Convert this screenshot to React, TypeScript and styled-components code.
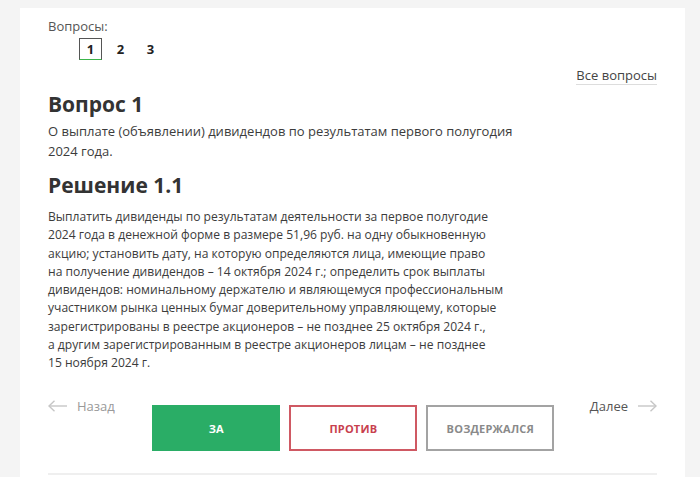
import React from "react";
import styled, { createGlobalStyle } from "styled-components";

const Global = createGlobalStyle`
  html, body { margin: 0; padding: 0; background: #f4f4f4; }
  body { font-family: "Open Sans", "Liberation Sans", sans-serif; color: #3c3c3c; }
  * { box-sizing: border-box; }
`;

const Card = styled.div`
  margin: 8px 0 0 20px;
  width: 665px;
  min-height: 469px;
  background: #fff;
  padding: 9px 28px 0 28px;
`;

const Label = styled.div`
  font-size: 13px;
  line-height: 18px;
  color: #555;
`;

const Pager = styled.div`
  display: flex;
  gap: 7px;
  margin: 3px 0 0 31px;
`;

const Page = styled.div<{ $active?: boolean }>`
  width: 23px;
  height: 22px;
  display: flex;
  align-items: center;
  justify-content: center;
  font-size: 13px;
  font-weight: 700;
  color: #222;
  border: 1px solid ${(p) => (p.$active ? "#555" : "transparent")};
  border-bottom-color: ${(p) => (p.$active ? "#3cb54a" : "transparent")};
`;

const AllRow = styled.div`
  display: flex;
  justify-content: flex-end;
  margin-top: 6px;
`;

const AllLink = styled.a`
  font-size: 13px;
  line-height: 18px;
  color: #444;
  text-decoration: none;
  border-bottom: 1px solid #ddd;
`;

const Heading = styled.h2<{ $top: number }>`
  margin: ${(p) => p.$top}px 0 0 0;
  font-size: 21px;
  line-height: 26px;
  font-weight: 700;
  color: #333;
`;

const Desc = styled.p`
  margin: 4px 0 0 0;
  max-width: 540px;
  font-size: 13px;
  line-height: 20px;
  color: #3c3c3c;
`;

const Body = styled.p`
  margin: 10px 0 0 0;
  max-width: 540px;
  font-size: 12.1px;
  line-height: 18.25px;
  color: #3c3c3c;
`;

const Nav = styled.div`
  display: flex;
  justify-content: space-between;
  align-items: flex-start;
  margin-top: 26px;
`;

const NavLink = styled.a`
  display: flex;
  align-items: center;
  gap: 9px;
  font-size: 13px;
  line-height: 16px;
  color: #999;
  text-decoration: none;
`;

const NextLink = styled(NavLink)`
  color: #555;
`;

const Buttons = styled.div`
  display: flex;
  gap: 9px;
  margin-top: 7px;
  margin-left: 2px;
`;

const VoteButton = styled.button<{ $kind: "for" | "against" | "abstain" }>`
  width: 128px;
  height: 46px;
  font-family: inherit;
  font-size: 11px;
  font-weight: 700;
  letter-spacing: 0.2px;
  cursor: pointer;
  background: ${(p) => (p.$kind === "for" ? "#2aad66" : "#fff")};
  color: ${(p) =>
    p.$kind === "for" ? "#fff" : p.$kind === "against" ? "#c8404e" : "#8a8a8a"};
  border: 2px solid
    ${(p) =>
      p.$kind === "for" ? "#2aad66" : p.$kind === "against" ? "#cf5963" : "#a3a3a3"};
`;

const Divider = styled.div`
  margin-top: 22px;
  border-top: 2px solid #efefef;
`;

const Arrow = ({ left }: { left?: boolean }) => (
  <svg width="20" height="12" viewBox="0 0 20 12" fill="none" stroke="#c6c6c6" strokeWidth="1.4">
    {left ? (
      <>
        <path d="M1 6h18" />
        <path d="M6.5 0.8 1 6l5.5 5.2" />
      </>
    ) : (
      <>
        <path d="M1 6h18" />
        <path d="M13.5 0.8 19 6l-5.5 5.2" />
      </>
    )}
  </svg>
);

const bodyLines = [
  "Выплатить дивиденды по результатам деятельности за первое полугодие",
  "2024 года в денежной форме в размере 51,96 руб. на одну обыкновенную",
  "акцию; установить дату, на которую определяются лица, имеющие право",
  "на получение дивидендов – 14 октября 2024 г.; определить срок выплаты",
  "дивидендов: номинальному держателю и являющемуся профессиональным",
  "участником рынка ценных бумаг доверительному управляющему, которые",
  "зарегистрированы в реестре акционеров – не позднее 25 октября 2024 г.,",
  "а другим зарегистрированным в реестре акционеров лицам – не позднее",
  "15 ноября 2024 г.",
];

export default function App() {
  return (
    <>
      <Global />
      <Card>
        <Label>Вопросы:</Label>
        <Pager>
          <Page $active>1</Page>
          <Page>2</Page>
          <Page>3</Page>
        </Pager>
        <AllRow>
          <AllLink href="#">Все вопросы</AllLink>
        </AllRow>
        <Heading $top={6}>Вопрос 1</Heading>
        <Desc>
          О выплате (объявлении) дивидендов по результатам первого полугодия
          <br />
          2024 года.
        </Desc>
        <Heading $top={11}>Решение 1.1</Heading>
        <Body>
          {bodyLines.map((l, i) => (
            <React.Fragment key={i}>
              {l}
              {i < bodyLines.length - 1 && <br />}
            </React.Fragment>
          ))}
        </Body>
        <Nav>
          <NavLink href="#">
            <Arrow left />
            Назад
          </NavLink>
          <Buttons>
            <VoteButton $kind="for">ЗА</VoteButton>
            <VoteButton $kind="against">ПРОТИВ</VoteButton>
            <VoteButton $kind="abstain">ВОЗДЕРЖАЛСЯ</VoteButton>
          </Buttons>
          <NextLink href="#">
            Далее
            <Arrow />
          </NextLink>
        </Nav>
        <Divider />
      </Card>
    </>
  );
}
